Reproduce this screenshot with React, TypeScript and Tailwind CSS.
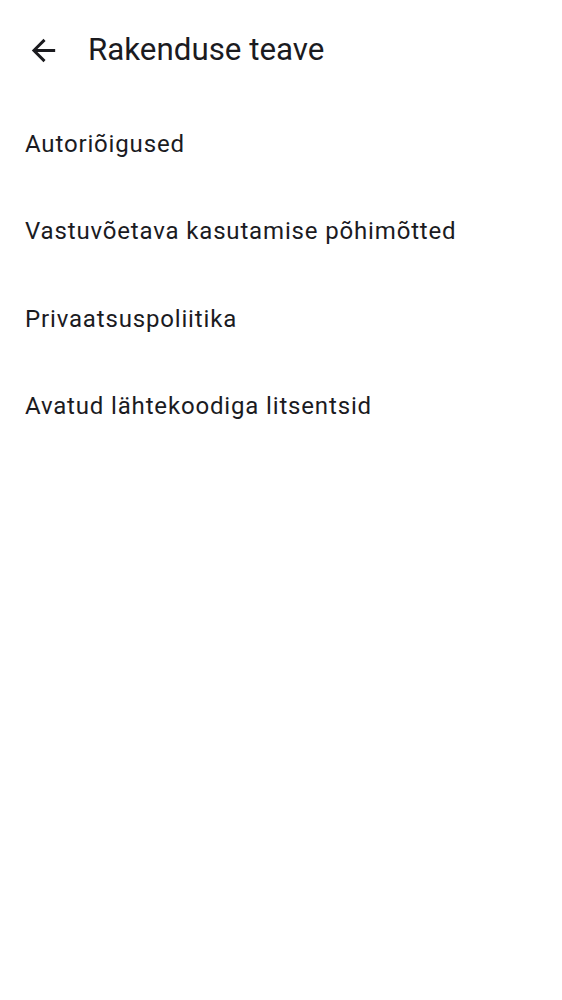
import React from 'react';

const items = [
  'Autoriõigused',
  'Vastuvõetava kasutamise põhimõtted',
  'Privaatsuspoliitika',
  'Avatud lähtekoodiga litsentsid',
];

const BackArrow = () => (
  <svg viewBox="0 0 24 24" className="w-[35px] h-[35px]" fill="currentColor">
    <path d="M20 11H7.83l5.59-5.59L12 4l-8 8 8 8 1.41-1.41L7.83 13H20v-2z" />
  </svg>
);

export default function App() {
  return (
    <div
      className="w-[562px] h-[1000px] bg-white text-[#1b1b1f]"
      style={{ fontFamily: 'Roboto, sans-serif' }}
    >
      <div className="flex items-center h-[100px] pl-[26px]">
        <button className="flex items-center justify-center w-[35px] h-[35px]">
          <BackArrow />
        </button>
        <h1 className="ml-[27px] text-[31.3px] font-normal leading-none">Rakenduse teave</h1>
      </div>
      <div className="flex flex-col">
        {items.map((item) => (
          <div key={item} className="flex items-center h-[87.5px] px-[25px] cursor-pointer">
            <span className="text-[24px] leading-none tracking-[0.84px]">{item}</span>
          </div>
        ))}
      </div>
    </div>
  );
}
